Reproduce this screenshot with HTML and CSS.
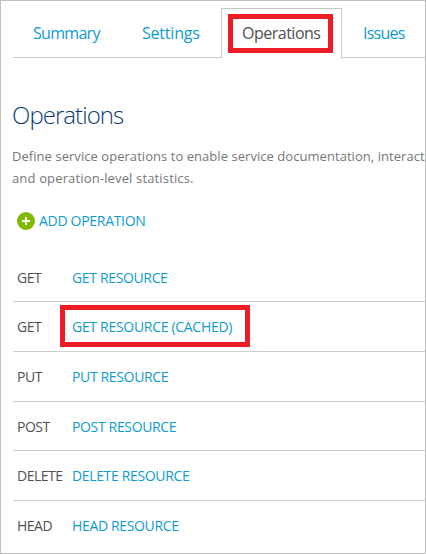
FILE: index.html
```
<!DOCTYPE html>
<html lang="en">
<head>
<meta charset="utf-8">
<title>Operations</title>
<link rel="stylesheet" href="styles.css">
</head>
<body>
<main class="frame">
  <nav class="tabs">
    <a class="tab summary"><span>Summary</span></a>
    <a class="tab settings"><span>Settings</span></a>
    <a class="tab active"><span class="mark">Operations</span></a>
    <a class="tab issues"><span>Issues</span></a>
  </nav>
  <h1><span>Operations</span></h1>
  <p class="intro"><span class="line1">Define service operations to enable service documentation, interact</span><br><span class="line2">and operation-level statistics.</span></p>
  <a class="add">
    <svg width="18" height="18" viewBox="0 0 18 18"><circle cx="9" cy="9" r="9" fill="#7fba00"/><path d="M9 5v8M5 9h8" stroke="#fff" stroke-width="2"/></svg>
    <span class="label">ADD OPERATION</span>
  </a>
  <ul class="ops">
    <li><span class="verb">GET</span><a>GET RESOURCE</a></li>
    <li><span class="verb">GET</span><a class="cached">GET RESOURCE (CACHED)</a></li>
    <li><span class="verb">PUT</span><a>PUT RESOURCE</a></li>
    <li class="short"><span class="verb">POST</span><a>POST RESOURCE</a></li>
    <li><span class="verb">DELETE</span><a>DELETE RESOURCE</a></li>
    <li><span class="verb">HEAD</span><a>HEAD RESOURCE</a></li>
  </ul>
</main>
</body>
</html>
```
FILE: styles.css
```
* { box-sizing: border-box; }
body { margin: 0; background: #fff; font-family: "Open Sans", "Noto Sans", sans-serif; font-size: 14px; color: #505050; }
.frame { width: 426px; height: 554px; border: 1px solid #bfbfbf; padding: 7px 0 0 12px; overflow: hidden; white-space: nowrap; }
a { color: #0f9bd0; }
.tabs { display: flex; height: 50px; font-size: 16px; line-height: 50px; }
.tab { border-bottom: 1px solid #c8c8c8; height: 50px; }
.summary { width: 109px; padding-left: 20px; letter-spacing: -0.7px; }
.settings { width: 99px; padding-left: 20px; letter-spacing: -0.2px; }
.active { width: 121px; border: 1px solid #c8c8c8; border-bottom: 0; padding: 5px 0 0 6px; color: #505050; }
.mark { display: block; width: 105px; height: 39px; border: 5px solid #ee1c25; padding-left: 9px; line-height: 29px; letter-spacing: -0.5px; }
.issues { flex: 1; padding-left: 21px; letter-spacing: -0.75px; }
h1 { margin: 40px 0 0 -1px; height: 34px; line-height: 34px; font-size: 24px; font-weight: 300; color: #0d3b70; letter-spacing: -0.95px; }
.intro { margin: 13px 0 0 -1px; height: 44px; line-height: 22px; font-size: 13px; color: #777; }
.line1 { letter-spacing: 0.05px; }
.line2 { letter-spacing: 0.15px; }
.add { display: flex; align-items: center; gap: 4px; margin: 21px 0 0 4px; height: 22px; letter-spacing: -0.3px; }
.label { padding-bottom: 2px; }
.ops { list-style: none; margin: 20px 0 0; padding: 0; }
.ops li { display: flex; align-items: center; height: 50px; border-bottom: 1px solid #cecece; letter-spacing: -0.35px; }
.ops li:first-child { padding-top: 2px; }
.ops li.short { height: 49px; }
.ops li:last-child { border: 0; height: 49px; }
.verb { width: 59px; padding-left: 4px; letter-spacing: -0.5px; }
.cached { margin: -1px 0 0 -12px; width: 190px; height: 42px; border: 5px solid #ee1c25; padding-left: 7px; line-height: 33px; letter-spacing: -0.3px; }
```
